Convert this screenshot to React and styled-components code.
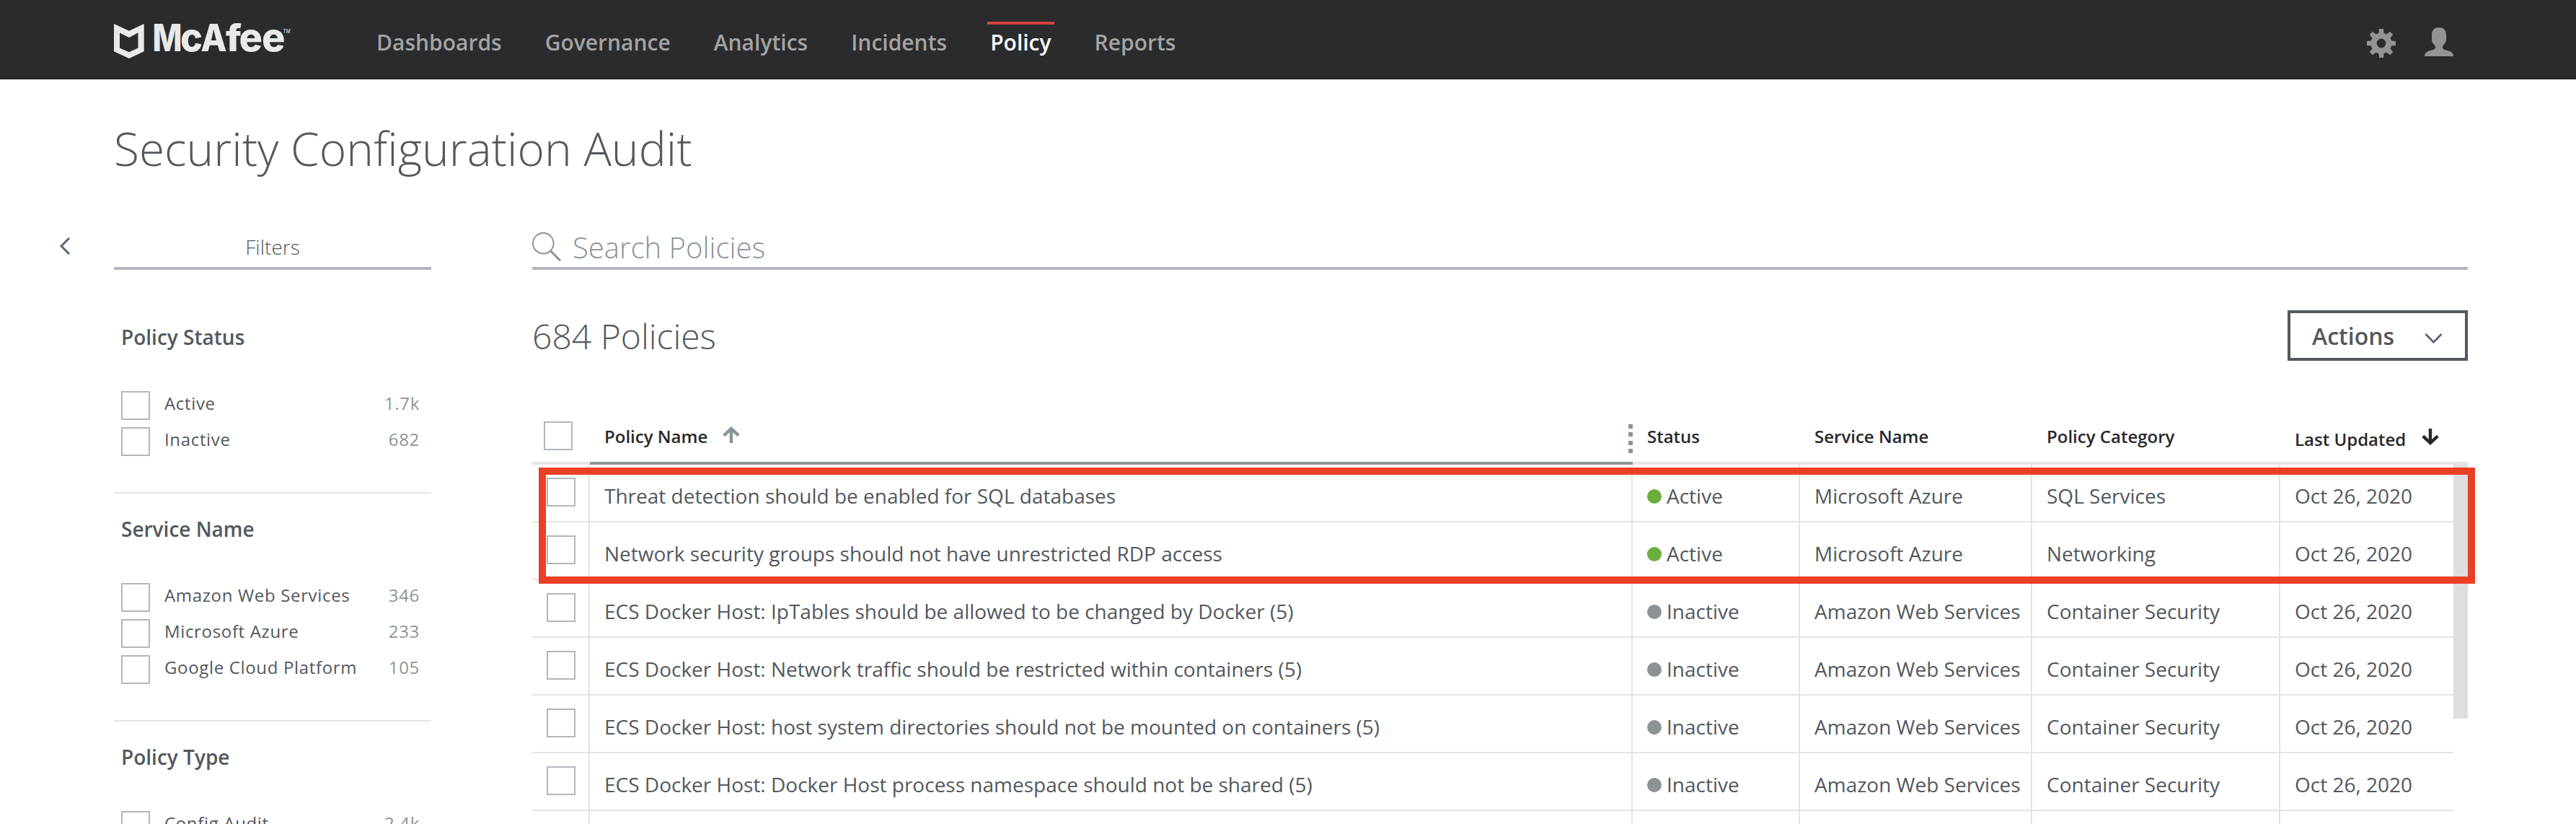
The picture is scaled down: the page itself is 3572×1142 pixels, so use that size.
import React from "react";
import styled, { createGlobalStyle } from "styled-components";

const GlobalStyle = createGlobalStyle`
  *, *::before, *::after { box-sizing: border-box; }
  body {
    margin: 0;
    background: #fff;
    color: #53585d;
    font-family: "Open Sans", "Noto Sans", sans-serif;
    font-size: 28px;
    line-height: 38px;
  }
`;

const Page = styled.div`
  width: 100%;
  height: 1142px;
  overflow: hidden;
`;

/* ---------- top bar ---------- */

const TopBar = styled.header`
  display: flex;
  height: 110px;
  padding: 0 170px 0 158px;
  background: #2a2b2d;
  border-bottom: 1px solid #1c1c1e;
`;

const Logo = styled.svg`
  display: block;
  width: 250px;
  height: 70px;
  margin-top: 22px;
  overflow: visible;
  fill: #e9e9e9;
  font-family: Inter, sans-serif;
`;

const Nav = styled.nav`
  display: flex;
  gap: 52px;
  margin: 30px 0 0 110px;
`;

const NavItem = styled.a`
  height: 53px;
  padding: 0 4px;
  border-top: 4px solid ${(p) => (p.$current ? "#d64242" : "transparent")};
  color: ${(p) => (p.$current ? "#fff" : "#a2a3a4")};
  font-size: 30px;
  font-weight: 600;
  line-height: 49px;
  white-space: nowrap;
`;

const TopIcons = styled.div`
  display: flex;
  gap: 40px;
  margin-left: auto;
`;

const TopIcon = styled.svg`
  display: block;
  width: 40px;
  height: 40px;
  margin-top: ${(p) => p.$drop}px;
  fill: #929395;
`;

/* ---------- page frame ---------- */

const Title = styled.h1`
  margin: 0;
  padding: 52px 0 0 158px;
  height: 200px;
  font-size: 64px;
  font-weight: 300;
  line-height: 87px;
`;

const Body = styled.div`
  display: flex;
  padding-right: 150px;
`;

const CollapseButton = styled.button`
  display: flex;
  align-items: flex-start;
  flex: none;
  width: 158px;
  height: 60px;
  padding: 19px 0 0 82px;
  border: 0;
  background: none;
`;

/* ---------- filters ---------- */

const Sidebar = styled.aside`
  flex: none;
  width: 440px;
`;

const SidebarHead = styled.div`
  height: 64px;
  padding-top: 13px;
  margin-bottom: 44px;
  border-bottom: 4px solid #b4b6bd;
  font-weight: 300;
  text-align: center;
`;

const FilterGroup = styled.section`
  padding: 30px 16px 40px 10px;
  border-bottom: 2px solid #e3e4e5;
`;

const FilterTitle = styled.h2`
  margin: 0 0 56px;
  font-size: 28px;
  font-weight: 600;
  line-height: 38px;
`;

const FilterRow = styled.label`
  display: flex;
  gap: 20px;
  height: 50px;
  font-size: 24px;
  line-height: 33px;
  letter-spacing: 0.66px;
`;

const FilterCount = styled.span`
  margin-left: auto;
  color: #8c9498;
`;

const Checkbox = styled.span`
  flex: none;
  width: 40px;
  height: 40px;
  border: 2px solid #b2b6bb;
  background: #fff;
`;

/* ---------- main ---------- */

const Main = styled.main`
  flex: 1;
  min-width: 0;
  margin-left: 140px;
`;

const SearchBar = styled.div`
  display: flex;
  align-items: flex-end;
  gap: 16px;
  height: 64px;
  border-bottom: 4px solid #b4b6bd;
  color: #8c9498;
  font-size: 40px;
  font-weight: 300;
  line-height: 55px;

  svg {
    display: block;
    margin-bottom: 8px;
  }
`;

const Toolbar = styled.div`
  display: flex;
  justify-content: space-between;
  height: 70px;
  margin: 56px 0 64px;
`;

const Total = styled.h2`
  margin: 3px 0 0;
  font-size: 48px;
  font-weight: 300;
  line-height: 65px;
`;

const ActionsButton = styled.button`
  display: flex;
  align-items: flex-start;
  justify-content: space-between;
  width: 250px;
  padding: 10px 31px 0 30px;
  border: 4px solid #53585d;
  background: #fff;
  color: #53585d;
  font-family: inherit;
  font-size: 32px;
  font-weight: 600;
  line-height: 43px;

  svg {
    display: block;
    margin-top: 18px;
  }
`;

const Table = styled.div`
  position: relative;
`;

const columns = "80px 1446px 232px 322px 344px";

const HeadRow = styled.div`
  display: grid;
  grid-template-columns: ${columns} 260px;
  height: 80px;
`;

const HeadCell = styled.div`
  display: flex;
  gap: ${(p) => p.$gap || 0}px;
  padding: ${(p) => p.$top || 24}px 0 0 20px;
  border-bottom: 4px solid ${(p) => (p.$sorted ? "#8b9498" : "#e4e5e7")};
  color: #28292b;
  font-size: 24px;
  font-weight: 600;
  line-height: 33px;
  white-space: nowrap;
`;

const SelectAllCell = styled(HeadCell)`
  padding: 20px 0 0 16px;
`;

const SortArrow = styled.svg`
  display: block;
  width: 24px;
  height: 24px;
  margin-top: ${(p) => p.$drop}px;
  fill: none;
  stroke: ${(p) => p.$tone};
  stroke-width: 4.4;
`;

const Grip = styled.span`
  display: flex;
  flex-direction: column;
  justify-content: space-between;
  width: 6px;
  height: 40px;
  margin-left: auto;

  i {
    height: 6px;
    background: #8b9498;
  }
`;

const Scroller = styled.div`
  display: flex;
`;

const Rows = styled.div`
  flex: none;
  width: 2664px;
`;

const Row = styled.div`
  display: grid;
  grid-template-columns: ${columns} 240px;
  height: 80px;
  border-bottom: 2px solid #e4e4e5;
`;

const Cell = styled.div`
  display: flex;
  gap: 7px;
  padding: 24px 0 0 20px;
  border-right: 2px solid #e4e4e5;
  white-space: nowrap;

  &:last-child {
    border-right: 0;
  }
`;

const CheckCell = styled(Cell)`
  padding-top: 18px;
`;

const Dot = styled.span`
  width: 20px;
  height: 20px;
  margin-top: 10px;
  border-radius: 50%;
  background: ${(p) => (p.$active ? "#6bae3e" : "#8c9396")};
`;

const ScrollThumb = styled.div`
  width: 20px;
  height: 352px;
  background: #dddee0;
`;

const Highlight = styled.div`
  position: absolute;
  top: 84px;
  left: 9px;
  width: 2685px;
  height: 161px;
  border: 10px solid #ea4026;
`;

/* ---------- data ---------- */

const navItems = ["Dashboards", "Governance", "Analytics", "Incidents", "Policy", "Reports"];

const filters = [
  { title: "Policy Status", options: [["Active", "1.7k"], ["Inactive", "682"]] },
  {
    title: "Service Name",
    options: [["Amazon Web Services", "346"], ["Microsoft Azure", "233"], ["Google Cloud Platform", "105"]],
  },
  { title: "Policy Type", options: [["Config Audit", "2.4k"]] },
];

const aws = ["Inactive", "Amazon Web Services", "Container Security"];
const policies = [
  ["Threat detection should be enabled for SQL databases", "Active", "Microsoft Azure", "SQL Services"],
  ["Network security groups should not have unrestricted RDP access", "Active", "Microsoft Azure", "Networking"],
  ["ECS Docker Host: IpTables should be allowed to be changed by Docker (5)", ...aws],
  ["ECS Docker Host: Network traffic should be restricted within containers (5)", ...aws],
  ["ECS Docker Host: host system directories should not be mounted on containers (5)", ...aws],
  ["ECS Docker Host: Docker Host process namespace should not be shared (5)", ...aws],
];

// Letter, left edge, advance and size: the wordmark has a narrow M and wide round letters.
const wordmark = [
  ["M", 53.5, 41, 52],
  ["c", 92, 31, 54],
  ["A", 120.5, 36, 52],
  ["f", 155, 22, 52],
  ["e", 173.5, 32.5, 54],
  ["e", 205, 32.5, 54],
];

/* ---------- drawings ---------- */

function McAfeeLogo() {
  return (
    <Logo viewBox="0 -10 250 70">
      <path
        fillRule="evenodd"
        d="M0 1 L21 10.7 L41.7 1 V39.3 L21 49 L0 39.3 Z M8 13.5 V34.5 L21 40.3 L33.5 34.5 V13.5 L21 20 Z"
      />
      <text y="39.3" fontWeight="800">
        {wordmark.map(([letter, x, width, size], i) => (
          <tspan key={i} x={x} fontSize={size} textLength={width} lengthAdjust="spacingAndGlyphs">
            {letter}
          </tspan>
        ))}
      </text>
      <text x="234.5" y="14" fontSize="7" textLength="10" lengthAdjust="spacingAndGlyphs">
        TM
      </text>
    </Logo>
  );
}

function Gear() {
  const teeth = [0, 45, 90, 135, 180, 225, 270, 315];
  return (
    <TopIcon viewBox="0 0 40 40" $drop={40}>
      <path
        fillRule="evenodd"
        d="M20 5.6 A14.4 14.4 0 1 0 20 34.4 A14.4 14.4 0 1 0 20 5.6 Z M20 13.6 A6.4 6.4 0 1 1 20 26.4 A6.4 6.4 0 1 1 20 13.6 Z"
      />
      {teeth.map((a) => (
        <path key={a} d="M17 0 H23 L23.8 8 H16.2 Z" transform={`rotate(${a} 20 20)`} />
      ))}
    </TopIcon>
  );
}

function Person() {
  return (
    <TopIcon viewBox="0 0 40 40" $drop={38}>
      <path d="M20 0 C13.8 0 10 4 10 10 V17 C10 21 13 23.5 14.6 25.5 C15.6 27.5 15.4 29 13 30.4 C9 32.4 0 32 0 40 H40 C40 32 31 32.4 27 30.4 C24.6 29 24.4 27.5 25.4 25.5 C27 23.5 30 21 30 17 V10 C30 4 26.2 0 20 0 Z" />
    </TopIcon>
  );
}

export default function App() {
  return (
    <Page>
      <GlobalStyle />
      <TopBar>
        <McAfeeLogo />
        <Nav>
          {navItems.map((name) => (
            <NavItem key={name} $current={name === "Policy"}>
              {name}
            </NavItem>
          ))}
        </Nav>
        <TopIcons>
          <Gear />
          <Person />
        </TopIcons>
      </TopBar>

      <Title>Security Configuration Audit</Title>

      <Body>
        <CollapseButton aria-label="Collapse filters">
          <svg width="16" height="24" viewBox="0 0 16 24" fill="none" stroke="#5d6679" strokeWidth="3">
            <path d="M14 1 L3 12 L14 23" />
          </svg>
        </CollapseButton>

        <Sidebar>
          <SidebarHead>Filters</SidebarHead>
          {filters.map((group) => (
            <FilterGroup key={group.title}>
              <FilterTitle>{group.title}</FilterTitle>
              {group.options.map(([label, count]) => (
                <FilterRow key={label}>
                  <Checkbox />
                  <span>{label}</span>
                  <FilterCount>{count}</FilterCount>
                </FilterRow>
              ))}
            </FilterGroup>
          ))}
        </Sidebar>

        <Main>
          <SearchBar>
            <svg width="40" height="40" viewBox="0 0 40 40" fill="none" stroke="#8c9498">
              <circle cx="15.3" cy="15.2" r="14.3" strokeWidth="2" />
              <path d="M25.6 26 L39 39.2" strokeWidth="3" />
            </svg>
            <span>Search Policies</span>
          </SearchBar>

          <Toolbar>
            <Total>684 Policies</Total>
            <ActionsButton>
              Actions
              <svg width="25" height="15" viewBox="0 0 25 15" fill="none" stroke="#5d6679" strokeWidth="2.8">
                <path d="M1.5 1 L12.5 12.2 L23.5 1" />
              </svg>
            </ActionsButton>
          </Toolbar>

          <Table>
            <HeadRow>
              <SelectAllCell>
                <Checkbox />
              </SelectAllCell>
              <HeadCell $sorted $gap={21}>
                Policy Name
                <SortArrow viewBox="0 0 24 24" $drop={3} $tone="#8b9498">
                  <path d="M12 23 V3 M1.8 12.6 L12 3 L22.2 12.6" />
                </SortArrow>
                <Grip>
                  <i />
                  <i />
                  <i />
                  <i />
                </Grip>
              </HeadCell>
              <HeadCell>Status</HeadCell>
              <HeadCell>Service Name</HeadCell>
              <HeadCell>Policy Category</HeadCell>
              <HeadCell $top={28} $gap={22}>
                Last Updated
                <SortArrow viewBox="0 0 24 24" $drop={2} $tone="#28292b">
                  <path d="M12 0 V20 M1.8 10.4 L12 20 L22.2 10.4" />
                </SortArrow>
              </HeadCell>
            </HeadRow>

            <Scroller>
              <Rows>
                {policies.map(([name, status, service, category]) => (
                  <Row key={name}>
                    <CheckCell>
                      <Checkbox />
                    </CheckCell>
                    <Cell>{name}</Cell>
                    <Cell>
                      <Dot $active={status === "Active"} />
                      {status}
                    </Cell>
                    <Cell>{service}</Cell>
                    <Cell>{category}</Cell>
                    <Cell>Oct 26, 2020</Cell>
                  </Row>
                ))}
                <Row>
                  <Cell />
                  <Cell />
                  <Cell />
                  <Cell />
                  <Cell />
                  <Cell />
                </Row>
              </Rows>
              <ScrollThumb />
            </Scroller>
            <Highlight />
          </Table>
        </Main>
      </Body>
    </Page>
  );
}
